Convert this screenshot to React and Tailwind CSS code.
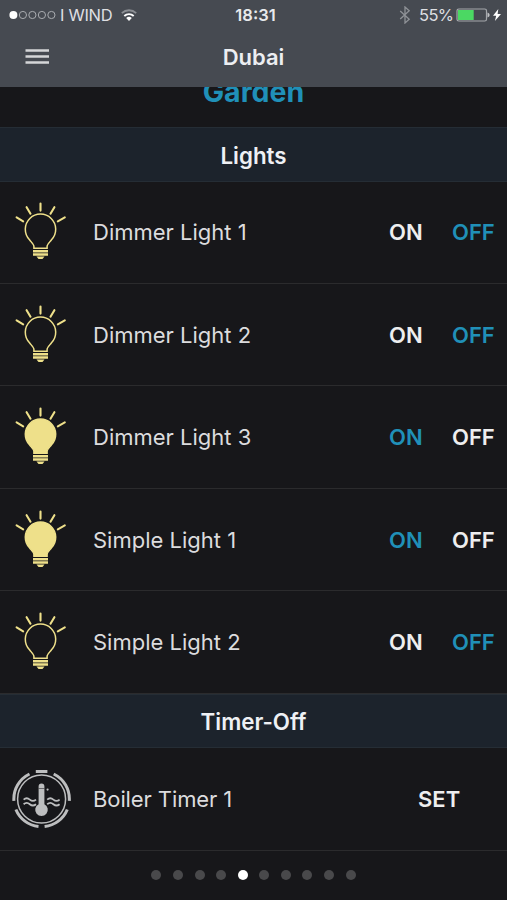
const lights = [
  { name: "Dimmer Light 1", on: false },
  { name: "Dimmer Light 2", on: false },
  { name: "Dimmer Light 3", on: true },
  { name: "Simple Light 1", on: true },
  { name: "Simple Light 2", on: false },
];

function BulbIcon({ on }) {
  return (
    <svg viewBox="0 0 57 60" className="h-[60px] w-[57px] shrink-0" fill="none" stroke="#eee08a">
      <path
        d="M28.5 1.5v7.1M14.6 5.2l3.9 6.5M4.6 15.4l6.6 3.9M42.4 5.2l-3.9 6.5M52.8 15.4l-7 3.9"
        strokeWidth="2.1"
        strokeLinecap="round"
      />
      <path
        d="M21.9 46.3v-2.1c0-1.6-2.2-3.6-4.4-6.4a15.2 15.2 0 1 1 22 0c-2.2 2.8-4.4 4.8-4.4 6.4v2.1z"
        fill={on ? "#eee08a" : "none"}
        strokeWidth="1.5"
      />
      <path d="M21 49.2h15M21 52.5h15" strokeWidth="2.4" />
      <path d="M24.5 54.6h8l-2 2.5h-4z" fill="#eee08a" stroke="none" />
    </svg>
  );
}

function BoilerIcon() {
  return (
    <svg viewBox="0 0 60 60" className="h-[60px] w-[60px] shrink-0" fill="none" stroke="#bdbebf">
      <path
        d="M23.8 2.6h11.6M41.7 5A27.8 27.8 0 0 1 57.3 31.9M55.3 40.5A27.8 27.8 0 0 1 32.6 57.6M26.5 57.6A27.8 27.8 0 0 1 3.9 40.5M1.9 31.9A27.8 27.8 0 0 1 17.5 5"
        strokeWidth="3"
      />
      <circle cx="29.6" cy="30" r="24" strokeWidth="1.5" />
      <path
        d="M11.6 30.6q3.1-2.6 6.2 0t6.2 0M11.6 35.2q3.1-2.6 6.2 0t6.2 0M35.2 30.6q3.1-2.6 6.2 0t6.2 0M35.2 35.2q3.1-2.6 6.2 0t6.2 0"
        strokeWidth="1.8"
      />
      <path
        d="M26.6 17.3a2.9 2.9 0 0 1 5.8 0v17.9a6.3 6.3 0 1 1-5.8 0z"
        fill="#bdbebf"
        stroke="none"
      />
      <path d="M26.6 19.5h5.8" stroke="#17171a" strokeWidth="0.5" />
      <circle cx="35.6" cy="20.6" r="1.1" fill="#bdbebf" stroke="none" />
    </svg>
  );
}

function StatusBar() {
  return (
    <div className="relative flex h-[30px] items-center justify-between pl-[9px] pr-[6px] text-[17px] text-[#dedfe2]">
      <div className="flex items-center">
        <svg viewBox="0 0 48 10" className="h-[10px] w-[48px]" fill="none" stroke="#a9acb0">
          <circle cx="4.4" cy="5" r="4" fill="#fff" stroke="none" />
          <circle cx="13.9" cy="5" r="3.6" />
          <circle cx="23.4" cy="5" r="3.6" />
          <circle cx="32.9" cy="5" r="3.6" />
          <circle cx="42.4" cy="5" r="3.6" />
        </svg>
        <span className="ml-[3px] w-[53px] whitespace-nowrap text-[16.5px] tracking-[-0.3px]">I WIND</span>
        <svg viewBox="0 0 16 12" className="ml-[8px] h-[12px] w-[16px]" fill="none">
          <path d="M.8 4.1a10.5 10.5 0 0 1 14.4 0" stroke="#8b8e93" strokeWidth="1.8" />
          <path d="M3.3 7a6.8 6.8 0 0 1 9.4 0" stroke="#fff" strokeWidth="1.9" />
          <path d="M5.2 9a4 4 0 0 1 5.6 0L8 11.9z" fill="#fff" />
        </svg>
      </div>
      <span className="absolute left-1/2 -translate-x-1/2 pl-[4px] text-[16.5px] font-semibold text-[#e8e9ec]">
        18:31
      </span>
      <div className="flex items-center">
        <svg viewBox="0 0 12 18" className="h-[18px] w-[12px]" fill="none" stroke="#8f9297" strokeWidth="1.3">
          <path d="M1.2 5l9 8.2L6 17V1l4.2 3.8-9 8.2" />
        </svg>
        <span className="ml-[8px] w-[34px] whitespace-nowrap text-[16.5px] tracking-[-0.6px]">55%</span>
        <svg viewBox="0 0 34 14" className="ml-[3px] h-[14px] w-[34px]">
          <rect x="1" y="1" width="29.5" height="12" rx="1.8" fill="none" stroke="#a5a8ac" strokeWidth="1.2" />
          <rect x="2" y="2" width="15.7" height="10" fill="#4bd863" />
          <path d="M31.5 4.6q2.2.6 2.2 2.4t-2.2 2.4z" fill="#c0c2c5" />
        </svg>
        <svg viewBox="0 0 8 12" className="ml-[3px] h-[12px] w-[8px]">
          <path d="M5.3 0L0 6.8h3.2L1.9 12 8 5H4.6z" fill="#fff" />
        </svg>
      </div>
    </div>
  );
}

function SectionTitle({ children }) {
  return (
    <div className="flex h-[54.7px] shrink-0 items-center justify-center border-y border-[#252d35] bg-[#1c232c] pt-[2px] text-[22.3px] font-semibold text-[#eef0f4]">
      {children}
    </div>
  );
}

function LightRow({ name, on }) {
  return (
    <div className="flex h-[102.4px] shrink-0 items-center border-b border-[#2b2b2d] pl-[12px] text-[22px]">
      <BulbIcon on={on} />
      <span className="ml-[24px] flex-1 whitespace-nowrap pt-px text-[#dcdcde]">{name}</span>
      <span className={`w-[63px] pt-px font-semibold ${on ? "text-[#2090b8]" : "text-[#eeeeef]"}`}>ON</span>
      <span className={`w-[55px] pt-px font-semibold ${on ? "text-[#eeeeef]" : "text-[#2090b8]"}`}>OFF</span>
    </div>
  );
}

export default function App() {
  return (
    <div className="flex h-[900px] w-[507px] flex-col overflow-hidden bg-[#17171a] font-['Inter','Liberation_Sans',sans-serif]">
      <header className="h-[87px] shrink-0 bg-[#464a51]">
        <StatusBar />
        <div className="grid h-[54px] grid-cols-[1fr_auto_1fr] items-center">
          <svg viewBox="0 0 24 16" className="ml-[25px] h-[16px] w-[24px]" stroke="#d5d6d8" strokeWidth="2.4">
            <path d="M.5 1.5h23.5M.5 7.5h23.5M.5 13.5h23.5" />
          </svg>
          <h1 className="pt-px text-[22px] font-semibold text-[#eceef1]">Dubai</h1>
        </div>
      </header>
      {/* room name, partly scrolled under the header */}
      <div className="flex h-[40px] shrink-0 items-end justify-center overflow-hidden pb-[13px]">
        <h2 className="text-[28.5px] font-bold text-[#2090b8]">Garden</h2>
      </div>
      <SectionTitle>Lights</SectionTitle>
      {lights.map((light) => (
        <LightRow key={light.name} name={light.name} on={light.on} />
      ))}
      <SectionTitle>Timer-Off</SectionTitle>
      <div className="flex h-[102.4px] shrink-0 items-center border-b border-[#2b2b2d] pl-[12px] text-[22px]">
        <BoilerIcon />
        <span className="ml-[21px] flex-1 pt-px tracking-[-0.1px] text-[#dcdcde]">Boiler Timer 1</span>
        <span className="w-[89px] pt-px font-semibold text-[#eeeeef]">SET</span>
      </div>
      <div className="flex h-[49px] shrink-0 items-center justify-center gap-[11.6px]">
        {Array.from({ length: 10 }, (_, i) => (
          <span key={i} className={`h-[10px] w-[10px] rounded-full ${i === 4 ? "bg-white" : "bg-[#49494b]"}`} />
        ))}
      </div>
    </div>
  );
}
